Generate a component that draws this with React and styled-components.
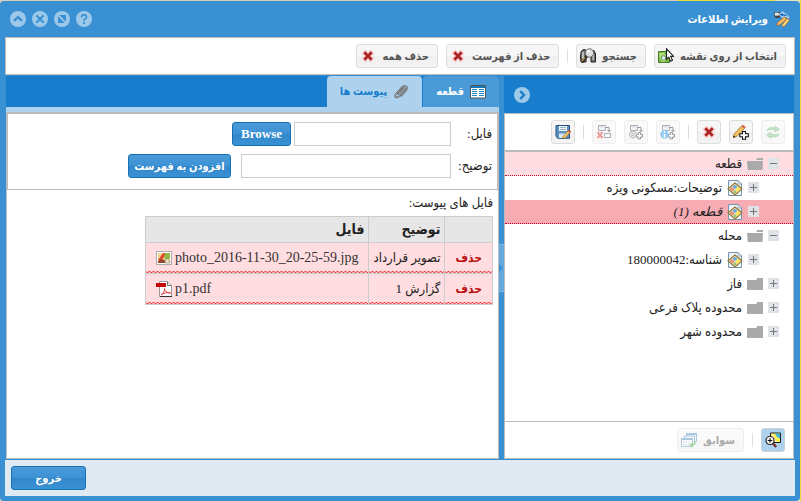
import React, { useState } from 'react';
import styled, { createGlobalStyle } from 'styled-components';

const TREE = [
  {
    id: 'parcel',
    label: 'قطعه',
    open: true,
    tone: 'light',
    children: [
      { id: 'desc', label: 'توضیحات:مسکونی ویژه' },
      { id: 'parcel1', label: 'قطعه (1)', tone: 'strong' },
    ],
  },
  {
    id: 'district',
    label: 'محله',
    open: true,
    children: [{ id: 'code', label: 'شناسه:180000042' }],
  },
  { id: 'phase', label: 'فاز' },
  { id: 'subplate', label: 'محدوده پلاک فرعی' },
  { id: 'city', label: 'محدوده شهر' },
];

const FILES = [
  { name: 'photo_2016-11-30_20-25-59.jpg', note: 'تصویر قرارداد', type: 'image' },
  { name: 'p1.pdf', note: 'گزارش 1', type: 'pdf' },
];

const Icon = ({ children }) => (
  <svg width="16" height="16" viewBox="0 0 16 16" aria-hidden="true">
    {children}
  </svg>
);

const Pencil = () => (
  <>
    <path d="M3 11 10.5 2.5 13.5 5 6 13.2 2.4 14.3z" fill="#f0c060" stroke="#a5722c" strokeWidth=".8" />
    <path d="M10.5 2.5 11.8 1 14.8 3.6 13.5 5z" fill="#e0524b" stroke="#b04038" strokeWidth=".6" />
    <path d="M2.8 12.6 2.2 14.5 4.2 13.9z" fill="#222" />
  </>
);

const TitleIcon = () => (
  <Icon>
    <path d="M0 1h6v6H2L0 5z" fill="#3d444b" />
    <path d="M.8 1.6h4v3h-4z" fill="#e3e8ec" />
    <path d="M5 3.5 9 .8v1.7c3 0 5 1 5.5 4.5C13 5.4 11 5 9 5.2v1.6z" fill="#1f6fc4" stroke="#fff" strokeWidth=".8" />
    <path d="M3.5 11.5 10.5 6l2.2 2.2-7 5.6-3 .8z" fill="#f6bd62" stroke="#9c6126" strokeWidth=".7" />
    <path d="m8 14 5.2-6.5 2.3 1.6-5 6.2-2.7.5z" fill="#ffd878" stroke="#9c6126" strokeWidth=".7" />
  </Icon>
);

const MapSelectIcon = () => (
  <Icon>
    <path d="M.5 3.5h11v11H.5z" fill="#78b943" stroke="#427d28" />
    <path d="M1 5h5l3 4-2 5H4L2 11z" fill="#b6dc83" />
    <circle cx="5.5" cy="10" r="2.3" fill="#dceff7" stroke="#5d9444" />
    <path d="M8.5.8v10.4l2.3-2.1 1.7 4.1 2-1-1.8-3.8h3z" fill="#fff" stroke="#222" strokeWidth="1.1" />
  </Icon>
);

const BinocularsIcon = () => (
  <Icon>
    <path d="M1 4 3 1.5l3 .5V14H1L.5 10zM11 3l3-.5L15.5 6v8H11z" fill="#6f6f6f" stroke="#222" />
    <path d="M2 4h2v7H2zM12.5 5H14v7h-1.5z" fill="#bcbcbc" />
    <circle cx="9.5" cy="5" r="4.2" fill="#dcdcdc" stroke="#666" />
    <path d="M7.5 4.5A2.2 2.2 0 0 1 10 2.7" stroke="#fff" strokeWidth="1.5" fill="none" />
    <path d="m6.8 8.5-5 6" stroke="#242424" strokeWidth="2.6" />
    <path d="m5.3 9.5-3.5 4" stroke="#d9a736" strokeWidth="1.1" />
  </Icon>
);

const CrossIcon = () => (
  <Icon>
    <path d="M3.5 3.5 12.5 12.5M12.5 3.5 3.5 12.5" stroke="#f8caca" strokeWidth="5.5" />
    <path d="M4.3 4.3 11.7 11.7M11.7 4.3 4.3 11.7" stroke="#ad2424" strokeWidth="2.7" />
  </Icon>
);

const RefreshIcon = () => (
  <Icon>
    <path d="M2 6.5C3 3.5 6 3.2 10 4V2l4.5 3.4L10 8V6C6 5.4 4 5.4 2 6.5z" fill="#8dcb8b" stroke="#5faa66" strokeWidth=".7" />
    <path d="M14 10c-1 3-4 3.4-8 2.5v2L1.5 11 6 8.3v2c4 .7 6 .7 8-.3z" fill="#8dcb8b" stroke="#5faa66" strokeWidth=".7" />
  </Icon>
);

const PencilAddIcon = () => (
  <Icon>
    <path d="M1 10 8.5 2 11.5 4.6 4 12.3.5 13.5z" fill="#f0c060" stroke="#a5722c" strokeWidth=".8" />
    <path d="M8.5 2 10 .8l2.8 2.5-1.3 1.3z" fill="#d85a4c" />
    <path d="M.5 11.7.2 13.8 2.5 13z" fill="#111" />
    <path d="M9.5 7.5h3v2.3h2.8v3h-2.8v2.4h-3v-2.4H6.8v-3h2.7z" fill="#fff" stroke="#111" strokeWidth="1.1" />
  </Icon>
);

const NodesIcon = ({ kind }) => (
  <Icon>
    <path d="M2.5 1.5h7v5h-7z" fill="#e5edf5" stroke="#55616e" />
    <path d="M4 3h4" stroke="#afbac5" />
    <path d="M10 3.5h3v4M11.5 6 13 7.8 14.5 6" fill="none" stroke="#333" />
    {kind === 'delete' && (
      <>
        <path d="M8.5 9.5h6v4h-6z" fill="#f2f5f8" stroke="#55616e" />
        <path d="m1.5 8 5 6m0-6-5 6" stroke="#df453c" strokeWidth="2.2" />
      </>
    )}
    {kind !== 'delete' && (
      <path d="M10.5 8.5h2v2h2v2.5h-2v2h-2.2v-2h-2v-2.5h2.2z" fill="#fff" stroke="#333" />
    )}
    {kind === 'gear' && (
      <>
        <circle cx="5" cy="10.5" r="3.3" fill="#ddd" stroke="#666" strokeWidth="1.4" strokeDasharray="1.5 .7" />
        <circle cx="5" cy="10.5" r="1.2" fill="#fff" stroke="#777" />
      </>
    )}
    {kind === 'info' && (
      <>
        <circle cx="4.5" cy="10.5" r="4.2" fill="#2496e1" />
        <path d="M4.5 7.2v1.5m0 1.2v3.8" stroke="#fff" strokeWidth="1.6" />
      </>
    )}
  </Icon>
);

const SaveIcon = () => (
  <Icon>
    <path d="M1 1.5h13.5v12.8H3L1 12.5z" fill="#5e91c5" stroke="#244f7d" />
    <path d="M4 2h8v5H4z" fill="#f4f7fa" />
    <path d="M5 3.5h6M5 5.5h6" stroke="#7ba4c3" strokeWidth=".8" />
    <path d="M4 9.5h7v4.5H4z" fill="#d6e5f1" />
    <g transform="translate(6 5) scale(.68)"><Pencil /></g>
  </Icon>
);

const TableIcon = () => (
  <Icon>
    <path d="M.5 1.5h15v12.5H.5z" fill="#fff" stroke="#555" />
    <path d="M1 2h14v2H1z" fill="#1779bd" />
    <path d="M2 5.5h5m2 0h5m-12 2h5m2 0h5m-12 2h5m2 0h5m-12 2h5m2 0h5" stroke="#2387c9" />
  </Icon>
);

const ClipIcon = () => (
  <Icon>
    <path d="M4.5 10.5 10 4.6c1.2-1.2 2.8.2 1.7 1.5l-6 6.4c-2 2-4.8.1-2.9-2.3l6.4-7c2.7-2.8 6.7-.4 4 3l-5.5 6.2" fill="none" stroke="#5a5a5a" strokeWidth="1.7" />
    <path d="M4.5 10.5 10 4.6c1.2-1.2 2.8.2 1.7 1.5l-6 6.4c-2 2-4.8.1-2.9-2.3l6.4-7c2.7-2.8 6.7-.4 4 3l-5.5 6.2" fill="none" stroke="#d0d4d7" strokeWidth=".6" />
  </Icon>
);

const FolderIcon = ({ open }) => (
  <Icon>
    {open ? (
      <>
        <path d="M0 4h9l1.5-2H16v2H0z" fill="#aaa" />
        <path d="M0 5h16l-.5 9H.8z" fill="#aaa" />
      </>
    ) : (
      <path d="M0 4h9l1.5-2H16v12H0z" fill="#aaa" />
    )}
  </Icon>
);

const FeatureIcon = () => (
  <Icon>
    <path d="M1.5.5H11L14.5 4v11.5h-13z" fill="#edf4fa" stroke="#7891a8" />
    <path d="M11 .5V4h3.5z" fill="#fff" stroke="#7891a8" strokeWidth=".7" />
    <path d="m8 3 7 5.8L8 15 1 8.8z" fill="#e6e0bd" stroke="#8f7532" strokeWidth="1.1" />
    <path d="m8 4.8 2.5 2L8 8.9 5.5 7z" fill="#6aa5dc" />
    <path d="m5 7.4 2.4 2-2 2.2L2.8 9z" fill="#e9816c" />
    <path d="m8.5 9 2.5-2 2.4 2-3 3.2z" fill="#ffe65c" />
    <path d="m6 12 2-2 1.8 2.2L8 13.6z" fill="#9ac57b" />
  </Icon>
);

const ZoomMapIcon = () => (
  <Icon>
    <path d="M5.5 1h10v9.5h-10z" fill="#fff04d" stroke="#222" />
    <path d="M10 1.5h5v5L12 5z" fill="#3fb4df" />
    <path d="m7 2 4 8" stroke="#fff" />
    <circle cx="5" cy="8.5" r="4" fill="#fff" stroke="#222" strokeWidth="1.2" />
    <path d="M5 6.2v4.6M2.7 8.5h4.6" stroke="#111" strokeWidth="1.2" />
    <path d="m8 11.5 3.2 3.5" stroke="#7a2b20" strokeWidth="2.4" />
  </Icon>
);

const HistoryIcon = () => (
  <Icon>
    <path d="M5.5 1.5h10v8h-10z" fill="#e8f2fa" stroke="#5c93bd" />
    <path d="M5 2h11" stroke="#5c93bd" strokeWidth="2" />
    <path d="M3.5 4h10v8h-10z" fill="#e8f2fa" stroke="#5c93bd" />
    <path d="M.5 6.5h11v8H.5z" fill="#fff" stroke="#5c93bd" />
    <path d="M0 7h12" stroke="#5c93bd" strokeWidth="2" />
    <path d="M2 10h8M2 12.5h6" stroke="#91a9bc" strokeDasharray="1.5 1" />
    <path d="M14.5 9.5c.3 3-1 4-3 4V16L8 12.8l3.5-2.4V12c1.4 0 2-1 1.5-2.5z" fill="#55b449" />
  </Icon>
);

const ImageFileIcon = () => (
  <Icon>
    <path d="M.5 1.5h15v13H.5z" fill="#fff" stroke="#aaa" />
    <path d="M2 3h12v10H2z" fill="#f1d692" />
    <path d="m2 10 5-7h4l-6 8z" fill="#df4932" />
    <path d="M9 3h5v5l-3 2-3-2z" fill="#93b848" />
    <path d="m2 11 4-2 8 4H2z" fill="#94472b" />
    <path d="m9 11 2-3 3 4v1H9z" fill="#ece5c8" stroke="#7a704e" strokeWidth=".6" />
  </Icon>
);

const PdfIcon = () => (
  <Icon>
    <path d="M3.5.5h8l4 4v11h-12z" fill="#fff" stroke="#999" />
    <path d="M11.5.5v4h4" fill="#e9e9e9" stroke="#777" />
    <path d="M0 2h10v4H0z" fill="#c70606" />
    <path d="M5 14c2-1 4-4 3.5-6.5C9 11 12 12 14.5 12 11 11 7 12 5 14z" fill="none" stroke="#e43c36" />
    <path d="M4 15.5h12" stroke="#333" />
  </Icon>
);

const RoundGlyph = ({ kind }) => (
  <Icon>
    <circle cx="8" cy="8" r="8" fill="#9cc8e9" />
    {kind === 'up' && <path d="m4 9.8 4-3.6 4 3.6" fill="none" stroke="#3991d4" strokeWidth="2.4" />}
    {kind === 'close' && <path d="m4.3 4.3 7.4 7.4m0-7.4-7.4 7.4" stroke="#3991d4" strokeWidth="2" />}
    {kind === 'resize' && <path d="M5.2 4H12v6.8zM4 5.2V12h6.8z" fill="#3991d4" />}
    {kind === 'help' && (
      <>
        <path d="M5.5 6.2C5.5 3 10.5 3 10.5 6c0 1.8-2.5 1.6-2.5 3.7" fill="none" stroke="#3991d4" strokeWidth="1.8" />
        <path d="M7 11h2v2H7z" fill="#3991d4" />
      </>
    )}
    {kind === 'next' && <path d="m6.3 4 3.6 4-3.6 4" fill="none" stroke="#177dcc" strokeWidth="2.4" />}
  </Icon>
);

const TreeNode = ({ node, level = 0 }) => {
  const [open, setOpen] = useState(Boolean(node.open));

  return (
    <li>
      <TreeRow $tone={node.tone} $level={level}>
        <Toggle aria-label={node.label} aria-expanded={open} onClick={() => setOpen(!open)}>
          <svg width="11" height="11" viewBox="0 0 11 11" aria-hidden="true">
            <path d={open ? 'M2 5.5h7' : 'M2 5.5h7M5.5 2v7'} stroke="#777" />
          </svg>
        </Toggle>
        {level === 0 ? <FolderIcon open={open} /> : <FeatureIcon />}
        <NodeText $selected={node.tone === 'strong'}>{node.label}</NodeText>
      </TreeRow>
      {open && node.children && (
        <TreeList>
          {node.children.map((child) => (
            <TreeNode key={child.id} node={child} level={level + 1} />
          ))}
        </TreeList>
      )}
    </li>
  );
};

const App = () => {
  const [tab, setTab] = useState('files');
  const [file, setFile] = useState('');
  const [note, setNote] = useState('');

  return (
    <>
      <GlobalStyle />
      <Dialog>
        <TitleBar>
          <TitleIcon />
          <Title>ویرایش اطلاعات</Title>
          <RoundButton aria-label="راهنما"><RoundGlyph kind="help" /></RoundButton>
          <RoundButton aria-label="اندازه"><RoundGlyph kind="resize" /></RoundButton>
          <RoundButton aria-label="بستن"><RoundGlyph kind="close" /></RoundButton>
          <RoundButton aria-label="جمع کردن"><RoundGlyph kind="up" /></RoundButton>
        </TitleBar>

        <MainToolbar>
          <ToolButton>انتخاب از روی نقشه<MapSelectIcon /></ToolButton>
          <ToolButton>جستجو<BinocularsIcon /></ToolButton>
          <Separator />
          <ToolButton>حذف از فهرست<CrossIcon /></ToolButton>
          <ToolButton>حذف همه<CrossIcon /></ToolButton>
        </MainToolbar>

        <Body>
          <SidePane>
            <SideHeader>
              <RoundButton aria-label="بعدی"><RoundGlyph kind="next" /></RoundButton>
            </SideHeader>
            <SideContent>
              <TreeToolbar>
                <IconButton aria-label="بازخوانی" disabled><RefreshIcon /></IconButton>
                <IconButton aria-label="افزودن"><PencilAddIcon /></IconButton>
                <IconButton aria-label="حذف"><CrossIcon /></IconButton>
                <Separator />
                <IconButton aria-label="اطلاعات" disabled><NodesIcon kind="info" /></IconButton>
                <IconButton aria-label="تنظیمات" disabled><NodesIcon kind="gear" /></IconButton>
                <IconButton aria-label="حذف ارتباط" disabled><NodesIcon kind="delete" /></IconButton>
                <Separator />
                <IconButton aria-label="ذخیره"><SaveIcon /></IconButton>
              </TreeToolbar>
              <Tree>
                {TREE.map((node) => (
                  <TreeNode key={node.id} node={node} />
                ))}
              </Tree>
              <SideFooter>
                <IconButton aria-label="بزرگنمایی" $active><ZoomMapIcon /></IconButton>
                <Separator />
                <ToolButton disabled>سوابق<HistoryIcon /></ToolButton>
              </SideFooter>
            </SideContent>
          </SidePane>

          <Splitter>
            <SplitHandle aria-label="جابجایی">
              <svg width="5" height="10" viewBox="0 0 5 10" aria-hidden="true">
                <path d="M0 1v8l4-4z" fill="#3991d4" />
              </svg>
            </SplitHandle>
          </Splitter>

          <MainPane>
            <Tabs>
              <Tab $active={tab === 'info'} onClick={() => setTab('info')}>
                <TableIcon />قطعه
              </Tab>
              <Tab $active={tab === 'files'} onClick={() => setTab('files')}>
                <ClipIcon />پیوست ها
              </Tab>
            </Tabs>
            <TabContent>
              <UploadForm onSubmit={(e) => e.preventDefault()}>
                <FormRow $gap={3}>
                  <Label htmlFor="file">فایل:</Label>
                  <TextInput id="file" $width={157} value={file} onChange={(e) => setFile(e.target.value)} />
                  <BrowseButton type="button">Browse</BrowseButton>
                </FormRow>
                <FormRow $gap={10}>
                  <Label htmlFor="note">توضیح:</Label>
                  <TextInput id="note" $width={210} value={note} onChange={(e) => setNote(e.target.value)} />
                  <BlueButton type="submit" $width={103}>افزودن به فهرست</BlueButton>
                </FormRow>
              </UploadForm>
              <ListTitle>فایل های پیوست:</ListTitle>
              <FileTable>
                <thead>
                  <tr>
                    <th />
                    <th>توضیح</th>
                    <th>فایل</th>
                  </tr>
                </thead>
                <tbody>
                  {FILES.map((item) => (
                    <tr key={item.name}>
                      <td><DeleteLink href="#">حذف</DeleteLink></td>
                      <td>{item.note}</td>
                      <td>
                        <FileName>
                          {item.type === 'pdf' ? <PdfIcon /> : <ImageFileIcon />}
                          {item.name}
                        </FileName>
                      </td>
                    </tr>
                  ))}
                </tbody>
              </FileTable>
            </TabContent>
          </MainPane>
        </Body>

        <Footer>
          <BlueButton type="button" $width={75}>خروج</BlueButton>
        </Footer>
      </Dialog>
    </>
  );
};

const GlobalStyle = createGlobalStyle`
  * {
    box-sizing: border-box;
  }

  body {
    margin: 0;
    background: linear-gradient(to left, #e2dc3c 0 1px, #e6e3bd 1px 26px, #e8df3a 26px 124px, #d9cfc0 124px);
    font-family: "Liberation Serif", "DejaVu Sans Condensed", "DejaVu Sans", serif;
    font-size: 13px;
    color: #222;
  }

  button, input {
    font: inherit;
    margin: 0;
  }

  svg {
    display: block;
    flex: none;
  }
`;

const Dialog = styled.div`
  direction: rtl;
  display: flex;
  flex-direction: column;
  height: calc(100vh - 1px);
  margin: 1px 1px 0 0;
  padding: 0 5px 5px;
  border-radius: 4px;
  background: #3991d4;
`;

const TitleBar = styled.header`
  display: flex;
  align-items: center;
  gap: 6px;
  height: 36px;
  padding: 0 5px;
`;

const Title = styled.h1`
  flex: 1;
  margin: 0;
  color: #fff;
  font-size: 11px;
  font-weight: bold;
`;

const RoundButton = styled.button`
  padding: 0;
  border: none;
  background: none;
  cursor: pointer;
`;

const MainToolbar = styled.div`
  display: flex;
  align-items: center;
  gap: 8px;
  height: 38px;
  padding: 0 8px;
  border: 1px solid #bbb;
  background: #fff;
`;

const ToolButton = styled.button`
  display: flex;
  align-items: center;
  gap: 6px;
  height: 24px;
  padding: 0 8px 0 3px;
  border: 1px solid #ddd;
  border-radius: 3px;
  background: linear-gradient(#f6f6f6 50%, #efefef 50%, #f4f4f4);
  color: #555;
  font-size: 11px;
  font-weight: bold;
  white-space: nowrap;
  cursor: pointer;

  &:disabled {
    opacity: 0.5;
    cursor: default;
  }
`;

const IconButton = styled(ToolButton)`
  justify-content: center;
  width: 24px;
  padding: 0;
  border-color: ${(props) => (props.$active ? '#c5d3de' : '#ddd')};
  ${(props) => props.$active && 'background: #aed2ee;'}
`;

const Separator = styled.span`
  width: 1px;
  height: 14px;
  background: #ddd;
`;

const Body = styled.div`
  display: flex;
  flex: 1;
  min-height: 0;
  padding: 1px 1px;
`;

const SidePane = styled.aside`
  display: flex;
  flex-direction: column;
  width: 290px;
`;

const SideHeader = styled.div`
  display: flex;
  align-items: center;
  justify-content: flex-end;
  height: 37px;
  padding: 0 10px;
  background: #177dcc;
`;

const SideContent = styled.div`
  display: flex;
  flex: 1;
  flex-direction: column;
  min-height: 0;
  border: 1px solid #bbb;
  background: #fff;
`;

const TreeToolbar = styled.div`
  display: flex;
  align-items: center;
  gap: 8px;
  height: 38px;
  padding: 0 8px;
  border-bottom: 2px solid #bbb;
`;

const Tree = styled.ul`
  flex: 1;
  min-height: 0;
  margin: 0;
  padding: 0;
  overflow: auto;
  list-style: none;
`;

const TreeList = styled.ul`
  margin: 0;
  padding: 0;
  list-style: none;
`;

const rowColors = { light: '#ffdde1', strong: '#f7abb3' };

const TreeRow = styled.div`
  display: flex;
  align-items: center;
  gap: 5px;
  height: 24px;
  padding-right: ${(props) => 14 + props.$level * 20}px;
  border-bottom: 1px ${(props) => (props.$tone ? 'dotted #d00020' : 'solid transparent')};
  background: ${(props) => rowColors[props.$tone] || '#fff'};
`;

const Toggle = styled.button`
  width: 11px;
  height: 11px;
  padding: 0;
  border: none;
  background: #dfe2e6;
  cursor: pointer;
`;

const NodeText = styled.span`
  font-style: ${(props) => (props.$selected ? 'italic' : 'normal')};
  white-space: nowrap;
`;

const SideFooter = styled.div`
  display: flex;
  align-items: center;
  gap: 8px;
  height: 37px;
  padding: 0 8px;
  border-top: 1px solid #bbb;
`;

const Splitter = styled.div`
  display: flex;
  align-items: center;
  width: 5px;
`;

const SplitHandle = styled.button`
  width: 5px;
  height: 48px;
  padding: 0;
  border: 1px solid #83bae4;
  border-width: 1px 0;
  background: #64a9dd;
  cursor: col-resize;
`;

const MainPane = styled.main`
  display: flex;
  flex: 1;
  flex-direction: column;
  min-width: 0;
`;

const Tabs = styled.div`
  display: flex;
  gap: 1px;
  height: 36px;
  border-bottom: 5px solid #aed2ee;
  background: #177dcc;
`;

const Tab = styled.button`
  display: flex;
  align-items: center;
  gap: 6px;
  padding: 0 13px;
  border: none;
  border-radius: 4px 4px 0 0;
  background: ${(props) => (props.$active ? '#aed2ee' : '#4a9ad8')};
  color: ${(props) => (props.$active ? '#177dcc' : '#fff')};
  font-size: 11px;
  font-weight: bold;
  cursor: pointer;
`;

const TabContent = styled.div`
  flex: 1;
  min-height: 0;
  border: 1px solid #bbb;
  border-top: none;
  background: #fff;
`;

const UploadForm = styled.form`
  display: flex;
  flex-direction: column;
  gap: 8px;
  padding: 8px 5px 11px;
  border: 1px solid #bbb;
  border-width: 2px 1px 1px;
`;

const FormRow = styled.div`
  display: flex;
  align-items: center;

  input {
    margin-left: ${(props) => props.$gap}px;
  }
`;

const Label = styled.label`
  width: 41px;
  white-space: nowrap;
`;

const TextInput = styled.input`
  width: ${(props) => props.$width}px;
  height: 24px;
  padding: 0 4px;
  border: 1px solid #ccc;
  background: #fff;
`;

const BlueButton = styled.button`
  height: 24px;
  min-width: ${(props) => props.$width}px;
  padding: 0 4px;
  border: 1px solid #1570b5;
  border-radius: 3px;
  background: linear-gradient(#4a9ad8, #3d92d4 50%, #3187c9 50%, #3a91d4);
  color: #fff;
  font-size: 11px;
  font-weight: bold;
  white-space: nowrap;
  cursor: pointer;
`;

const BrowseButton = styled(BlueButton)`
  padding: 0 8px;
  font-size: 13px;
`;

const ListTitle = styled.p`
  margin: 0;
  padding: 0 5px;
  line-height: 26px;
`;

const FileTable = styled.table`
  margin-right: 5px;
  border-collapse: collapse;

  th, td {
    height: 31px;
    padding: 0 4px;
    border: 1px solid #ccc;
    text-align: right;
    white-space: nowrap;
  }

  th {
    height: 26px;
    background: #e6e6e6;
    font-size: 14px;
  }

  td {
    background: repeating-conic-gradient(#f33 0 25%, transparent 0 50%) 0 100% / 4px 2px repeat-x #ffdde1;
  }

  td:first-child, td:last-child {
    padding: 0 10px;
  }
`;

const FileName = styled.span`
  display: flex;
  align-items: center;
  gap: 3px;
  direction: ltr;
  color: #333;
  font-size: 14px;
`;

const DeleteLink = styled.a`
  color: #b11;
  font-size: 12px;
  font-weight: bold;
  text-decoration: none;
`;

const Footer = styled.footer`
  display: flex;
  align-items: center;
  justify-content: flex-end;
  height: 36px;
  padding: 0 6px;
  background: #e0eaf2;
`;

export default App;
